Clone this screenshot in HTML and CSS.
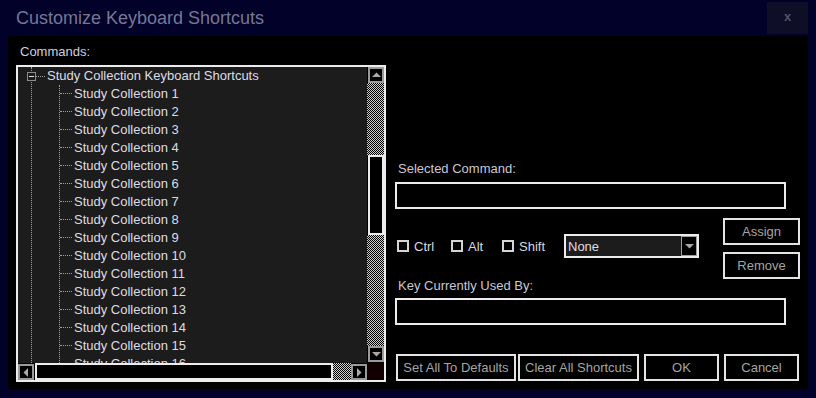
FILE: index.html
```html
<!DOCTYPE html>
<html>
<head>
<meta charset="utf-8">
<link rel="stylesheet" href="styles.css">
</head>
<body>
<div class="window">
  <div class="titlebar">
    <span class="title">Customize Keyboard Shortcuts</span>
    <div class="close">x</div>
  </div>
  <div class="content">
    <div class="left">
      <div class="commands">Commands:</div>
      <div class="tree-box">
        <div class="tree-main">
          <div class="tree-view">
            <div class="tree-root">
              <span class="expander"><span class="minus"></span></span>
              <span class="root-link"></span>
              <span class="node">Study Collection Keyboard Shortcuts</span>
            </div>
            <div class="tree-children">
              <div class="tree-item"><span class="node">Study Collection 1</span></div>
              <div class="tree-item"><span class="node">Study Collection 2</span></div>
              <div class="tree-item"><span class="node">Study Collection 3</span></div>
              <div class="tree-item"><span class="node">Study Collection 4</span></div>
              <div class="tree-item"><span class="node">Study Collection 5</span></div>
              <div class="tree-item"><span class="node">Study Collection 6</span></div>
              <div class="tree-item"><span class="node">Study Collection 7</span></div>
              <div class="tree-item"><span class="node">Study Collection 8</span></div>
              <div class="tree-item"><span class="node">Study Collection 9</span></div>
              <div class="tree-item"><span class="node">Study Collection 10</span></div>
              <div class="tree-item"><span class="node">Study Collection 11</span></div>
              <div class="tree-item"><span class="node">Study Collection 12</span></div>
              <div class="tree-item"><span class="node">Study Collection 13</span></div>
              <div class="tree-item"><span class="node">Study Collection 14</span></div>
              <div class="tree-item"><span class="node">Study Collection 15</span></div>
              <div class="tree-item"><span class="node">Study Collection 16</span></div>
            </div>
          </div>
          <div class="vscroll">
            <div class="sb-btn"><svg width="9" height="6" viewBox="0 0 9 6"><polygon points="0,5 9,5 4.5,0.5" fill="#a8a8a8"/></svg></div>
            <div class="checker track-top"></div>
            <div class="thumb-v"></div>
            <div class="checker track-fill"></div>
            <div class="sb-btn"><svg width="9" height="6" viewBox="0 0 9 6"><polygon points="0,1 9,1 4.5,5.5" fill="#a8a8a8"/></svg></div>
          </div>
        </div>
        <div class="hscroll">
          <div class="sb-btn h"><svg width="6" height="9" viewBox="0 0 6 9"><polygon points="5,0 5,9 0.5,4.5" fill="#a8a8a8"/></svg></div>
          <div class="thumb-h"></div>
          <div class="checker track-h"></div>
          <div class="sb-btn h"><svg width="6" height="9" viewBox="0 0 6 9"><polygon points="1,0 1,9 5.5,4.5" fill="#a8a8a8"/></svg></div>
          <div class="corner"></div>
        </div>
      </div>
    </div>
    <div class="right">
      <div class="field-label sel-label">Selected Command:</div>
      <div class="textbox"></div>
      <div class="mid">
        <div class="options">
          <label class="check w-ctrl"><span class="box"></span><span class="check-text">Ctrl</span></label>
          <label class="check w-alt"><span class="box"></span><span class="check-text">Alt</span></label>
          <label class="check w-shift"><span class="box"></span><span class="check-text">Shift</span></label>
          <div class="select">
            <span class="select-text">None</span>
            <span class="select-arrow"><svg width="9" height="6" viewBox="0 0 9 6"><polygon points="0,1 9,1 4.5,5.5" fill="#a8a8a8"/></svg></span>
          </div>
        </div>
        <div class="btn-col">
          <div class="btn btn-side">Assign</div>
          <div class="btn btn-side">Remove</div>
        </div>
      </div>
      <div class="field-label">Key Currently Used By:</div>
      <div class="textbox key-box"></div>
      <div class="bottom">
        <div class="btn btn-defaults">Set All To Defaults</div>
        <div class="btn btn-clear">Clear All Shortcuts</div>
        <div class="btn btn-ok">OK</div>
        <div class="btn btn-cancel">Cancel</div>
      </div>
    </div>
  </div>
</div>
</body>
</html>
```
FILE: styles.css
```css
html, body {
  margin: 0;
  padding: 0;
}
body {
  background: #01012a;
  font-family: "Liberation Sans", Arial, sans-serif;
  font-size: 13px;
}
.window {
  width: 816px;
  height: 398px;
  display: flex;
  flex-direction: column;
}
.titlebar {
  height: 36px;
  flex: none;
  display: flex;
  align-items: flex-start;
  justify-content: space-between;
  padding: 0 8px 0 16px;
  box-sizing: border-box;
}
.title {
  font-size: 18px;
  line-height: 35px;
  margin-top: 1px;
  color: #777794;
}
.close {
  width: 41px;
  height: 32px;
  margin-top: 2px;
  background: #0e0e26;
  color: #52526c;
  display: flex;
  align-items: center;
  justify-content: center;
  font-size: 13px;
  font-weight: bold;
  line-height: 13px;
  padding-bottom: 3px;
  box-sizing: border-box;
}
.content {
  margin: 0 8px;
  height: 353px;
  background: #000;
  display: flex;
  padding: 7px 8px 0 8px;
  box-sizing: border-box;
}
.left {
  width: 370px;
  display: flex;
  flex-direction: column;
}
.commands {
  padding-left: 4px;
  line-height: 15px;
  margin-top: 1px;
  margin-bottom: 6px;
  color: #d0d0d8;
}
.tree-box {
  height: 317px;
  border: 2px solid #ececec;
  box-sizing: border-box;
  display: flex;
  flex-direction: column;
}
.tree-main {
  flex: 1;
  display: flex;
  min-height: 0;
}
.tree-view {
  flex: 1;
  background: #1c1c1c;
  position: relative;
  overflow: hidden;
}
.tree-view::before {
  content: "";
  position: absolute;
  left: 13px;
  top: 0;
  bottom: 0;
  border-left: 1px dotted #a0a0a0;
}
.tree-root {
  position: relative;
  height: 18px;
  display: flex;
  align-items: flex-start;
  padding-left: 9px;
}
.expander {
  width: 9px;
  height: 9px;
  margin-top: 5px;
  box-sizing: border-box;
  border: 1px solid #8c8c8c;
  background: #1c1c1c;
  display: flex;
  align-items: center;
  justify-content: center;
}
.minus {
  width: 5px;
  height: 1px;
  background: #e0e0e0;
}
.root-link {
  width: 9px;
  margin-top: 9px;
  border-top: 1px dotted #a0a0a0;
}
.node {
  line-height: 14px;
  margin-top: 2px;
  color: #dcdce4;
  margin-left: 2px;
  white-space: nowrap;
}
.tree-children {
  margin-left: 41px;
  border-left: 1px dotted #a0a0a0;
}
.tree-item {
  height: 18px;
  display: flex;
  align-items: flex-start;
}
.tree-item::before {
  content: "";
  width: 12px;
  margin-top: 8px;
  border-top: 1px dotted #a0a0a0;
}
.vscroll {
  width: 17px;
  display: flex;
  flex-direction: column;
}
.checker {
  background: repeating-conic-gradient(#cfcfcf 0 25%, #000 0 50%) 0 0 / 2px 2px;
}
.sb-btn {
  width: 16px;
  height: 16px;
  flex: none;
  box-sizing: border-box;
  border: 2px solid #9a9a9a;
  background: #000;
  display: flex;
  align-items: center;
  justify-content: center;
  margin-left: 1px;
}
.sb-btn svg {
  display: block;
}
.track-top {
  height: 72px;
}
.thumb-v {
  height: 80px;
  margin-left: 1px;
  width: 16px;
  box-sizing: border-box;
  border: 2px solid #ececec;
  background: #000;
}
.track-fill {
  flex: 1;
}
.vscroll .sb-btn:last-child {
  margin-bottom: 1px;
}
.hscroll {
  height: 17px;
  display: flex;
}
.sb-btn.h {
  margin: 1px 0 0 0;
}
.thumb-h {
  width: 298px;
  margin-left: 1px;
  box-sizing: border-box;
  border: 2px solid #ececec;
  background: #000;
}
.track-h {
  width: 18px;
}
.corner {
  width: 17px;
  background: #120000;
}
.right {
  width: 405px;
  margin-left: 9px;
  display: flex;
  flex-direction: column;
}
.field-label {
  line-height: 13px;
  color: #c8c8d2;
  padding-left: 3px;
}
.sel-label {
  margin-top: 119px;
}
.textbox {
  width: 391px;
  height: 27px;
  border: 2px solid #ececec;
  background: #000;
  box-sizing: border-box;
  margin-top: 7px;
  flex: none;
}
.key-box {
  margin-top: 6px;
}
.mid {
  display: flex;
  justify-content: space-between;
  margin-top: 9px;
  height: 61px;
}
.options {
  display: flex;
  align-items: center;
  margin-top: 16px;
  height: 24px;
  padding-left: 2px;
}
.check {
  display: flex;
  align-items: center;
}
.w-ctrl { width: 54px; }
.w-alt { width: 51px; }
.w-shift { width: 62px; }
.box {
  width: 12px;
  height: 12px;
  box-sizing: border-box;
  border: 2px solid #d4d4d4;
  background: #000;
  flex: none;
}
.check-text {
  margin-left: 5px;
  color: #d8d8e0;
}
.select {
  width: 135px;
  height: 24px;
  border: 2px solid #ececec;
  background: #1c1c1c;
  box-sizing: border-box;
  display: flex;
  align-items: center;
  justify-content: space-between;
}
.select-text {
  padding-left: 2px;
  color: #dcdce4;
}
.select-arrow {
  width: 16px;
  height: 20px;
  box-sizing: border-box;
  border: 1px solid #a0a0a0;
  background: #000;
  display: flex;
  align-items: center;
  justify-content: center;
}
.btn-col {
  display: flex;
  flex-direction: column;
  gap: 7px;
}
.btn {
  height: 27px;
  border: 2px solid #e4e4e4;
  background: #000;
  color: #a4a4a4;
  display: flex;
  align-items: center;
  justify-content: center;
  box-sizing: border-box;
  white-space: nowrap;
}
.btn-side {
  width: 77px;
}
.bottom {
  display: flex;
  margin-top: 29px;
  padding-left: 1px;
}
.btn-defaults { width: 120px; }
.btn-clear { width: 121px; margin-left: 2px; }
.btn-ok { width: 75px; margin-left: 5px; }
.btn-cancel { width: 75px; margin-left: 5px; }
```
